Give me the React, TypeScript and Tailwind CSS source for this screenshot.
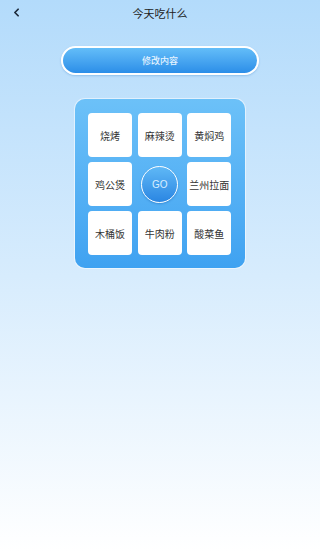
import { ChevronLeft } from "lucide-react";

const FOODS = ["烧烤", "麻辣烫", "黄焖鸡", "鸡公煲", "GO", "兰州拉面", "木桶饭", "牛肉粉", "酸菜鱼"];

export default function App() {
  return (
    <div
      className="w-[320px] h-[552px] flex flex-col items-center bg-gradient-to-b from-[#b3dbfb] via-[#d7ecfd] to-[#ffffff]"
      style={{ fontFamily: '"Noto Sans CJK SC", "Noto Sans", sans-serif' }}
    >
      <div className="relative w-full h-[26px] flex items-center justify-center">
        <ChevronLeft size={13} strokeWidth={3.2} className="absolute left-[10px] top-[6px] text-[#1d2a3a]" />
        <span className="text-[11px] text-[#222]">今天吃什么</span>
      </div>

      <button className="mt-[20px] w-[198px] h-[29px] rounded-full border-2 border-white bg-gradient-to-b from-[#63bdf8] to-[#2b8ee8] text-[#e6f4ff] text-[9px] font-medium shadow-[0_1px_2px_rgba(40,120,200,0.3)]">
        修改内容
      </button>

      <div className="mt-[24px] w-[170px] rounded-[10px] bg-gradient-to-b from-[#6cc1f8] to-[#3fa2f1] pt-[14px] pb-[13px] px-[13px] grid grid-cols-3 gap-[5px] shadow-[0_0_0_1px_rgba(255,255,255,0.5)]">
        {FOODS.map((f) =>
          f === "GO" ? (
            <div key={f} className="w-[44px] h-[44px] flex items-center justify-center">
              <div className="w-[37px] h-[37px] rounded-full border-[1.5px] border-white bg-gradient-to-b from-[#5fb8f6] to-[#2a86e2] flex items-center justify-center shadow-[0_1px_2px_rgba(20,90,170,0.4)]">
                <span className="text-[10px] text-[#d9eeff]" style={{ fontFamily: '"Liberation Sans", sans-serif' }}>GO</span>
              </div>
            </div>
          ) : (
            <div
              key={f}
              className="w-[44px] h-[44px] rounded-[4px] bg-white flex items-center justify-center text-[10px] text-[#333]"
            >
              {f}
            </div>
          )
        )}
      </div>
    </div>
  );
}
